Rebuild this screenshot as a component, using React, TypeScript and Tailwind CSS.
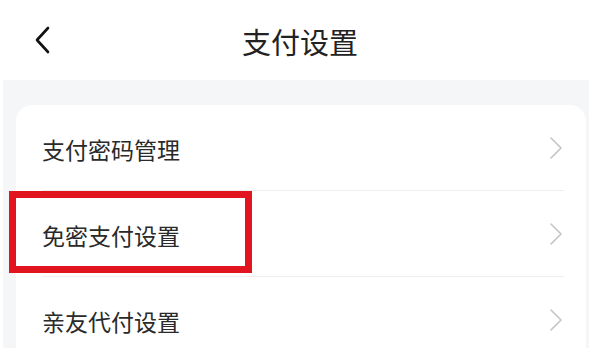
import React from "react";

const Chevron = () => (
  <svg width="16" height="24" viewBox="0 0 16 24" fill="none" className="shrink-0">
    <path d="M3 2 L13 12 L3 22" stroke="#c4c4c4" strokeWidth="1.6" strokeLinecap="round" strokeLinejoin="round" />
  </svg>
);

const Row = ({ label, boxed }: { label: string; boxed?: boolean }) => (
  <div className="relative flex h-[85px] items-center justify-between pl-[26px] pr-[22px]">
    <span className="text-[23px] leading-none text-[#2a2a2a] pt-[4px]">{label}</span>
    <Chevron />
    {boxed && (
      <div className="pointer-events-none absolute left-[-7px] top-0 h-[82px] w-[243px] border-[7px] border-[#e1141f]" />
    )}
  </div>
);

export default function App() {
  return (
    <div
      className="h-[348px] w-[600px] overflow-hidden bg-white"
      style={{ fontFamily: '"Noto Sans CJK SC", "Noto Sans", sans-serif' }}
    >
      <div className="grid h-[80px] grid-cols-[1fr_auto_1fr] items-center">
        <svg width="18" height="30" viewBox="0 0 18 30" fill="none" className="ml-[33px]">
          <path d="M15 3 L4 15 L15 27" stroke="#111" strokeWidth="2.6" strokeLinecap="round" strokeLinejoin="round" />
        </svg>
        <span className="text-[29px] leading-none text-[#222] pt-[2px]">支付设置</span>
        <div />
      </div>
      <div className="ml-[3px] h-[268px] w-[586px] bg-[#f5f6f8] pl-[13px] pr-[3px] pt-[25px]">
        <div className="rounded-t-[16px] bg-white">
          <Row label="支付密码管理" />
          <div className="ml-[26px] mr-[22px] h-px bg-[#eeeeee]" />
          <Row label="免密支付设置" boxed />
          <div className="ml-[26px] mr-[22px] h-px bg-[#eeeeee]" />
          <Row label="亲友代付设置" />
        </div>
      </div>
    </div>
  );
}
